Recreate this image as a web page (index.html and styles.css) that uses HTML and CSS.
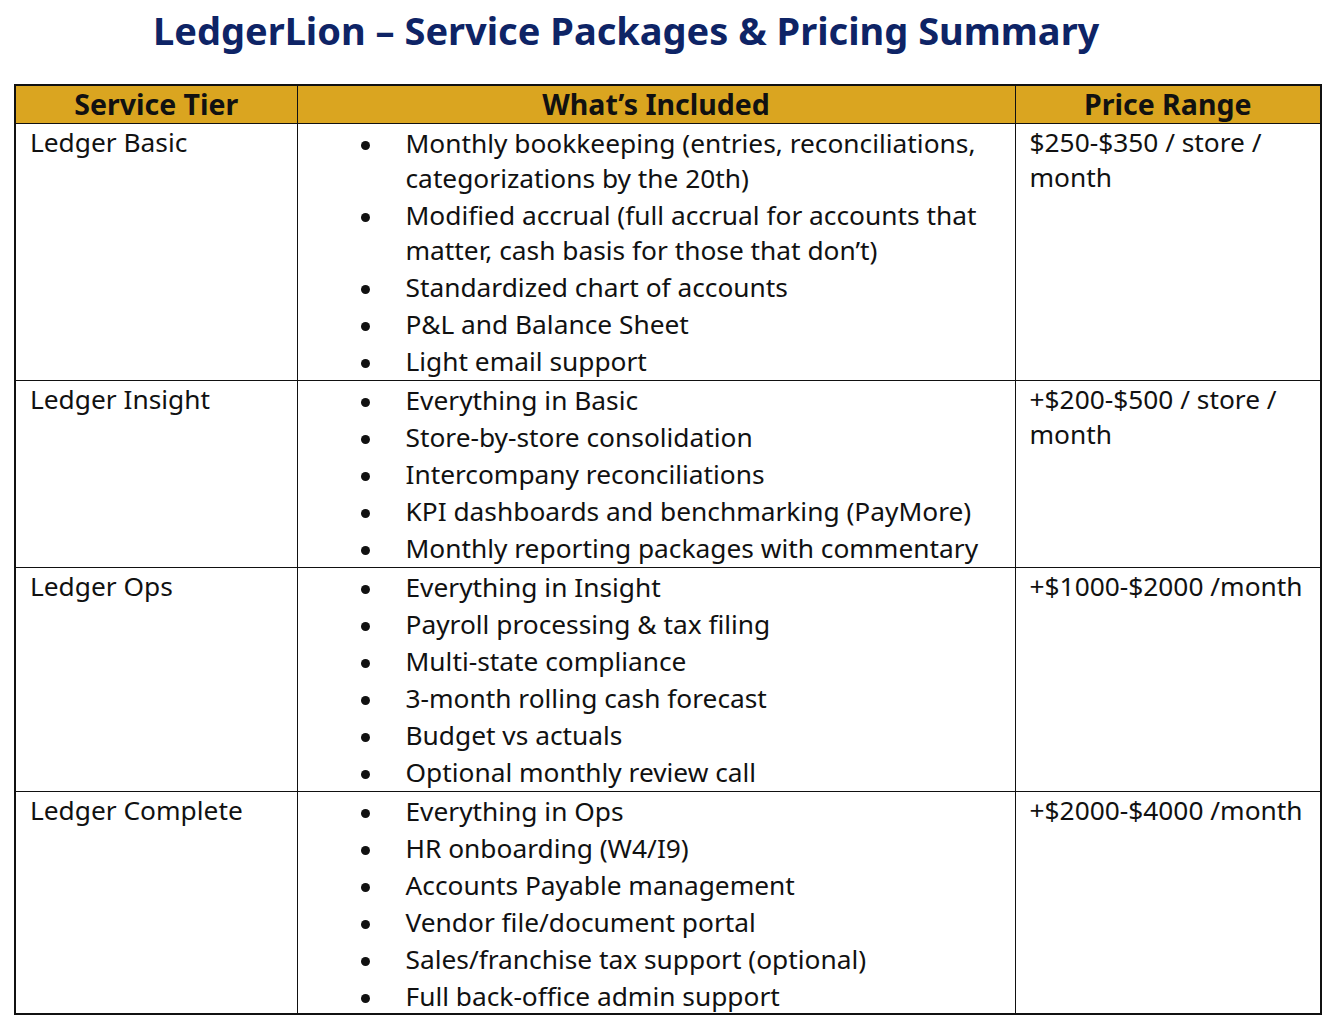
FILE: index.html
```html
<!DOCTYPE html>
<html>
<head>
<meta charset="utf-8">
<link rel="stylesheet" href="styles.css">
</head>
<body>
<h1 class="title">LedgerLion – Service Packages &amp; Pricing Summary</h1>
<table class="pricing">
  <colgroup>
    <col class="c-tier">
    <col class="c-inc">
    <col class="c-price">
  </colgroup>
  <thead>
    <tr><th>Service Tier</th><th>What’s Included</th><th>Price Range</th></tr>
  </thead>
  <tbody>
    <tr class="r1">
      <td class="tier">Ledger Basic</td>
      <td class="inc"><ul>
        <li>Monthly bookkeeping (entries, reconciliations, categorizations by the 20th)</li>
        <li>Modified accrual (full accrual for accounts that matter, cash basis for those that don’t)</li>
        <li>Standardized chart of accounts</li>
        <li>P&amp;L and Balance Sheet</li>
        <li>Light email support</li>
      </ul></td>
      <td class="price">$250-$350 / store / month</td>
    </tr>
    <tr class="r2">
      <td class="tier">Ledger Insight</td>
      <td class="inc"><ul>
        <li>Everything in Basic</li>
        <li>Store-by-store consolidation</li>
        <li>Intercompany reconciliations</li>
        <li>KPI dashboards and benchmarking (PayMore)</li>
        <li>Monthly reporting packages with commentary</li>
      </ul></td>
      <td class="price">+$200-$500 / store / month</td>
    </tr>
    <tr class="r3">
      <td class="tier">Ledger Ops</td>
      <td class="inc"><ul>
        <li>Everything in Insight</li>
        <li>Payroll processing &amp; tax filing</li>
        <li>Multi-state compliance</li>
        <li>3-month rolling cash forecast</li>
        <li>Budget vs actuals</li>
        <li>Optional monthly review call</li>
      </ul></td>
      <td class="price">+$1000-$2000 /month</td>
    </tr>
    <tr class="r4">
      <td class="tier">Ledger Complete</td>
      <td class="inc"><ul>
        <li>Everything in Ops</li>
        <li>HR onboarding (W4/I9)</li>
        <li>Accounts Payable management</li>
        <li>Vendor file/document portal</li>
        <li>Sales/franchise tax support (optional)</li>
        <li>Full back-office admin support</li>
      </ul></td>
      <td class="price">+$2000-$4000 /month</td>
    </tr>
  </tbody>
</table>
</body>
</html>
```
FILE: styles.css
```css
html, body {
  margin: 0;
  padding: 0;
  background: #ffffff;
}
body {
  font-family: "Noto Sans", "Open Sans", sans-serif;
  color: #111111;
  padding: 0 0 0 14px;
}
.title {
  margin: 6px 0 0 0;
  padding-left: 139px;
  height: 78px;
  font-size: 38px;
  font-weight: 700;
  color: #0e2466;
  line-height: 48px;
  letter-spacing: 0;
}
.pricing {
  border-collapse: collapse;
  width: 1306px;
  table-layout: fixed;
  border: 2px solid #111;
}
.c-tier { width: 282px; }
.c-inc { width: 718px; }
.c-price { width: 306px; }
.pricing th {
  background: #daa520;
  font-size: 28.5px;
  font-weight: 700;
  height: 37px;
  padding: 0;
  line-height: 37px;
  border: 1px solid #111;
  color: #111;
}
.pricing td {
  border: 1px solid #111;
  vertical-align: top;
  font-size: 26.3px;
  line-height: 35px;
  padding: 1px 8px 1px 14px;
}
.pricing td.tier { padding-left: 14px; }
.pricing td.price { padding-left: 14px; padding-right: 6px; }
.pricing ul {
  margin: 0;
  padding: 1px 0 0 108px;
  list-style: none;
}
.pricing li {
  position: relative;
  margin-bottom: 2px;
}
.pricing li:last-child { margin-bottom: 0; }
.pricing li::before {
  content: "";
  position: absolute;
  left: -45px;
  top: 15px;
  width: 9px;
  height: 9px;
  border-radius: 50%;
  background: #111;
}
.pricing td.inc { padding-left: 0; padding-right: 14px; }
.pricing .r4 td { padding-bottom: 0; }
.pricing .r4 li:last-child { line-height: 34px; }
```
